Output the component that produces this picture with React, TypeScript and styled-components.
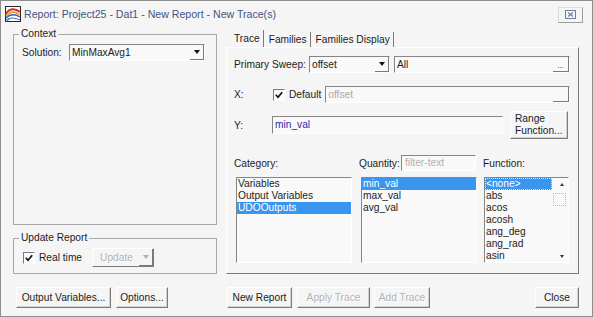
import styled, { createGlobalStyle } from 'styled-components';

const GlobalStyle = createGlobalStyle`
  html, body {
    margin: 0;
    padding: 0;
    background: #f5f5f5;
  }
  * {
    box-sizing: border-box;
  }
`;

const font = `'Liberation Sans', Arial, sans-serif`;
const dark = '#858585';

const Window = styled.div`
  width: 593px;
  height: 317px;
  border: 1px solid #8d8d8d;
  background: #f5f5f5;
  font-family: ${font};
  font-size: 10.2px;
  color: #1c1c1c;
  display: flex;
  flex-direction: column;
  overflow: hidden;
`;

const TitleBar = styled.div`
  height: 26px;
  display: flex;
  align-items: center;
  padding: 0 9px 0 4px;
`;

const TitleText = styled.div`
  flex: 1;
  margin-left: 3px;
  font-size: 10.6px;
  color: #45537e;
`;

const CloseBox = styled.div`
  width: 25px;
  height: 16px;
  margin-top: 1px;
  border: 1px solid;
  border-color: #dcdcdc #9c9c9c #9c9c9c #dcdcdc;
  display: flex;
  align-items: center;
  justify-content: center;
`;

const Main = styled.div`
  flex: 1;
  min-height: 0;
  display: flex;
  gap: 9px;
  padding: 1px 13px 8px 12px;
`;

const LeftColumn = styled.div`
  width: 204px;
  display: flex;
  flex-direction: column;
`;

const RightColumn = styled.div`
  width: 353px;
  display: flex;
  flex-direction: column;
`;

const Group = styled.fieldset<{ $grow?: boolean; $gap?: number }>`
  margin: ${(p) => p.$gap ?? 0}px 0 0;
  padding: 4px 8px 6px;
  border: 1px solid #a8a8a8;
  min-width: 0;
  flex: ${(p) => (p.$grow ? 1 : 'none')};
`;

const Legend = styled.legend`
  padding: 0 2px;
  margin-left: -3px;
  line-height: 12px;
`;

const FieldRow = styled.div<{ $top?: number; $h: number }>`
  display: flex;
  align-items: center;
  height: ${(p) => p.$h}px;
  margin-top: ${(p) => p.$top ?? 0}px;
`;

const Label = styled.span<{ $w?: number }>`
  flex: none;
  width: ${(p) => (p.$w ? `${p.$w}px` : 'auto')};
  white-space: nowrap;
`;

const Combo = styled.div<{ $w: number }>`
  width: ${(p) => p.$w}px;
  height: 17px;
  display: flex;
  border: 1px solid;
  border-color: ${dark} #fff #fff ${dark};
  background: #f9f9f9;
`;

const ComboText = styled.div`
  flex: 1;
  padding-left: 2px;
  line-height: 15px;
`;

const DropButton = styled.div<{ $disabled?: boolean }>`
  width: 14px;
  border-right: 1px solid #7a7a7a;
  border-bottom: 1px solid #7a7a7a;
  display: flex;
  align-items: center;
  justify-content: center;

  &::after {
    content: '';
    border-left: 3.5px solid transparent;
    border-right: 3.5px solid transparent;
    border-top: 4px solid ${(p) => (p.$disabled ? '#b0b0b0' : '#111')};
  }
`;

const TextBox = styled.div<{ $h?: number }>`
  flex: 1;
  height: ${(p) => p.$h ?? 17}px;
  display: flex;
  border: 1px solid;
  border-color: ${dark} #fff #fff ${dark};
  background: #f9f9f9;
`;

const BoxText = styled.div<{ $tone?: 'muted' | 'link' }>`
  flex: 1;
  padding-left: 2px;
  line-height: 15px;
  color: ${(p) =>
    p.$tone === 'muted' ? '#a9a9a9' : p.$tone === 'link' ? '#2b2ba8' : 'inherit'};
`;

const BrowseButton = styled.div`
  width: 16px;
  border-right: 1px solid #7a7a7a;
  border-bottom: 1px solid #7a7a7a;
  font-size: 8px;
  line-height: 18px;
  text-align: center;
  color: #333;
`;

const CheckBox = styled.span`
  flex: none;
  width: 12px;
  height: 12px;
  border: 1px solid;
  border-color: #7a7a7a #fff #fff #7a7a7a;
  background: #fafafa;
  display: flex;
  align-items: center;
  justify-content: center;
`;

const CheckText = styled.span`
  margin-left: 4px;
  white-space: nowrap;
`;

const Button = styled.button<{ $w: number; $h?: number }>`
  width: ${(p) => p.$w}px;
  height: ${(p) => p.$h ?? 21}px;
  flex: none;
  padding: 0;
  font: inherit;
  line-height: 12px;
  color: #1c1c1c;
  background: #f5f5f5;
  border: 1px solid;
  border-color: #fff #7a7a7a #7a7a7a #fff;
  box-shadow: inset -1px -1px 0 #d2d2d2;

  &:disabled {
    color: #b2b2b2;
    text-shadow: 1px 1px 0 #fff;
  }
`;

const SplitButton = styled.div`
  margin-left: 10px;
  width: 62px;
  height: 19px;
  display: flex;
  border: 1px solid;
  border-color: #fff #7a7a7a #7a7a7a #fff;
  color: #b2b2b2;
  text-shadow: 1px 1px 0 #fff;
`;

const SplitText = styled.span`
  flex: 1;
  padding-left: 7px;
  line-height: 17px;
`;

const ButtonRow = styled.div<{ $indent: number }>`
  display: flex;
  gap: 5px;
  margin-top: 13px;
  padding-left: ${(p) => p.$indent}px;
`;

const Spacer = styled.div`
  flex: 1;
`;

const TabStrip = styled.div`
  height: 19px;
  display: flex;
  align-items: flex-end;
`;

const Tab = styled.div<{ $active?: boolean }>`
  height: ${(p) => (p.$active ? 17 : 15)}px;
  padding: 0 3px 0 ${(p) => (p.$active ? 8 : 5)}px;
  border-right: 1px solid #7a7a7a;
  display: flex;
  align-items: center;
  white-space: nowrap;
`;

const TabPanel = styled.div`
  flex: 1;
  display: flex;
  flex-direction: column;
  border: 1px solid;
  border-color: #fff #7a7a7a #7a7a7a #fff;
  padding: 8px 8px 10px 7px;
`;

const ListGrid = styled.div`
  flex: 1;
  margin-top: 16px;
  display: grid;
  grid-template-columns: 125px 124px 1fr;
  grid-template-rows: 16px 1fr;
  row-gap: 6px;
`;

const ListHeader = styled.div`
  display: flex;
  align-items: center;
`;

const FilterBox = styled.div`
  width: 75px;
  height: 16px;
  margin-left: auto;
  margin-right: 7px;
  border: 1px solid;
  border-color: ${dark} #fff #fff ${dark};
  padding-left: 3px;
  line-height: 14px;
  color: #b0b0b0;
  background: #f9f9f9;
`;

const ListBox = styled.div<{ $w: number; $indent: number }>`
  width: ${(p) => p.$w}px;
  margin-left: ${(p) => p.$indent}px;
  display: flex;
  border: 1px solid;
  border-color: ${dark} #fff #fff ${dark};
  background: #f9f9f9;
  overflow: hidden;
`;

const ListItems = styled.div`
  flex: 1;
  min-width: 0;
`;

const ListItem = styled.div<{ $selected?: boolean; $focus?: boolean }>`
  height: 12px;
  line-height: 12px;
  padding-left: 1px;
  white-space: nowrap;
  background: ${(p) => (p.$selected ? '#3a95ee' : 'transparent')};
  color: ${(p) => (p.$selected ? '#fff' : 'inherit')};
  outline: ${(p) => (p.$focus ? '1px dotted #d8e8ff' : 'none')};
  outline-offset: -1px;
`;

const ScrollBar = styled.div`
  width: 16px;
  display: flex;
  flex-direction: column;
  align-items: center;
  padding: 5px 0 4px;
`;

const Arrow = styled.span<{ $down?: boolean }>`
  margin-left: 4px;
  border-left: 2.5px solid transparent;
  border-right: 2.5px solid transparent;
  ${(p) => (p.$down ? 'border-top' : 'border-bottom')}: 3px solid #333;
`;

const Thumb = styled.div`
  width: 13px;
  height: 13px;
  margin: 7px 0 auto -2px;
  border: 1px dotted #b8b8b8;
`;

function AppIcon() {
  return (
    <svg width="16" height="16" viewBox="0 0 16 16">
      <rect x="0.5" y="0.5" width="15" height="15" fill="#fff" stroke="#2a2a2a" />
      <path d="M1 8 C4 2, 10 2, 15 6" stroke="#d8312a" strokeWidth="2" fill="none" />
      <path d="M1 10 C5 5, 10 5, 15 9" stroke="#f39a22" strokeWidth="1.6" fill="none" />
      <path d="M1 12 C5 8, 10 8, 15 11" stroke="#2f64c8" strokeWidth="1.4" fill="none" />
      <path d="M1 14 C5 11, 10 12, 15 14" stroke="#2f64c8" strokeWidth="1" fill="none" />
      <path d="M1.5 15 L5 13" stroke="#3aa040" strokeWidth="1" />
    </svg>
  );
}

function CloseGlyph() {
  return (
    <svg width="11" height="9" viewBox="0 0 11 9">
      <rect x="0.5" y="0.5" width="10" height="8" fill="none" stroke="#6c7ca4" />
      <path d="M3 2.5 L8 6.5 M8 2.5 L3 6.5" stroke="#6c7ca4" strokeWidth="1.2" />
    </svg>
  );
}

function Check() {
  return (
    <svg width="8" height="8" viewBox="0 0 8 8">
      <path d="M0.8 3.8 L3 6.2 L7.2 1.2" stroke="#111" strokeWidth="1.7" fill="none" />
    </svg>
  );
}

const categories = ['Variables', 'Output Variables', 'UDOOutputs'];
const quantities = ['min_val', 'max_val', 'avg_val'];
const functions = ['<none>', 'abs', 'acos', 'acosh', 'ang_deg', 'ang_rad', 'asin'];

export default function App() {
  return (
    <>
      <GlobalStyle />
      <Window>
        <TitleBar>
          <AppIcon />
          <TitleText>Report: Project25 - Dat1 - New Report - New Trace(s)</TitleText>
          <CloseBox>
            <CloseGlyph />
          </CloseBox>
        </TitleBar>
        <Main>
          <LeftColumn>
            <Group $grow>
              <Legend>Context</Legend>
              <FieldRow $h={17}>
                <Label $w={47}>Solution:</Label>
                <Combo $w={136}>
                  <ComboText>MinMaxAvg1</ComboText>
                  <DropButton />
                </Combo>
              </FieldRow>
            </Group>
            <Group $gap={7}>
              <Legend>Update Report</Legend>
              <FieldRow $h={19}>
                <CheckBox style={{ marginLeft: 1 }}>
                  <Check />
                </CheckBox>
                <CheckText>Real time</CheckText>
                <SplitButton>
                  <SplitText>Update</SplitText>
                  <DropButton $disabled />
                </SplitButton>
              </FieldRow>
            </Group>
            <ButtonRow $indent={3}>
              <Button $w={95}>Output Variables...</Button>
              <Button $w={52}>Options...</Button>
            </ButtonRow>
          </LeftColumn>

          <RightColumn>
            <TabStrip>
              <Tab $active>Trace</Tab>
              <Tab>Families</Tab>
              <Tab>Families Display</Tab>
            </TabStrip>
            <TabPanel>
              <FieldRow $h={17}>
                <Label $w={75}>Primary Sweep:</Label>
                <Combo $w={81}>
                  <ComboText>offset</ComboText>
                  <DropButton />
                </Combo>
                <TextBox style={{ marginLeft: 4 }}>
                  <BoxText>All</BoxText>
                  <BrowseButton>...</BrowseButton>
                </TextBox>
              </FieldRow>

              <FieldRow $h={17} $top={13}>
                <Label $w={39}>X:</Label>
                <CheckBox>
                  <Check />
                </CheckBox>
                <CheckText>Default</CheckText>
                <TextBox style={{ marginLeft: 4 }}>
                  <BoxText $tone="muted">offset</BoxText>
                  <BrowseButton />
                </TextBox>
              </FieldRow>

              <FieldRow $h={28} $top={8}>
                <Label $w={38}>Y:</Label>
                <TextBox $h={18}>
                  <BoxText $tone="link">min_val</BoxText>
                </TextBox>
                <Button $w={58} $h={28} style={{ marginLeft: 7, marginRight: 2, textAlign: 'left', paddingLeft: 4 }}>
                  Range
                  <br />
                  Function...
                </Button>
              </FieldRow>

              <ListGrid>
                <ListHeader>Category:</ListHeader>
                <ListHeader>
                  Quantity:
                  <FilterBox>filter-text</FilterBox>
                </ListHeader>
                <ListHeader>Function:</ListHeader>

                <ListBox $w={116} $indent={2}>
                  <ListItems>
                    {categories.map((c) => (
                      <ListItem key={c} $selected={c === 'UDOOutputs'}>
                        {c}
                      </ListItem>
                    ))}
                  </ListItems>
                </ListBox>
                <ListBox $w={116} $indent={2}>
                  <ListItems>
                    {quantities.map((q) => (
                      <ListItem key={q} $selected={q === 'min_val'}>
                        {q}
                      </ListItem>
                    ))}
                  </ListItems>
                </ListBox>
                <ListBox $w={85} $indent={1}>
                  <ListItems>
                    {functions.map((f) => (
                      <ListItem key={f} $selected={f === '<none>'} $focus={f === '<none>'}>
                        {f}
                      </ListItem>
                    ))}
                  </ListItems>
                  <ScrollBar>
                    <Arrow />
                    <Thumb />
                    <Arrow $down />
                  </ScrollBar>
                </ListBox>
              </ListGrid>
            </TabPanel>
            <ButtonRow $indent={1}>
              <Button $w={65}>New Report</Button>
              <Button $w={73} disabled>
                Apply Trace
              </Button>
              <Button $w={56} disabled style={{ marginLeft: -1 }}>
                Add Trace
              </Button>
              <Spacer />
              <Button $w={44}>Close</Button>
            </ButtonRow>
          </RightColumn>
        </Main>
      </Window>
    </>
  );
}
